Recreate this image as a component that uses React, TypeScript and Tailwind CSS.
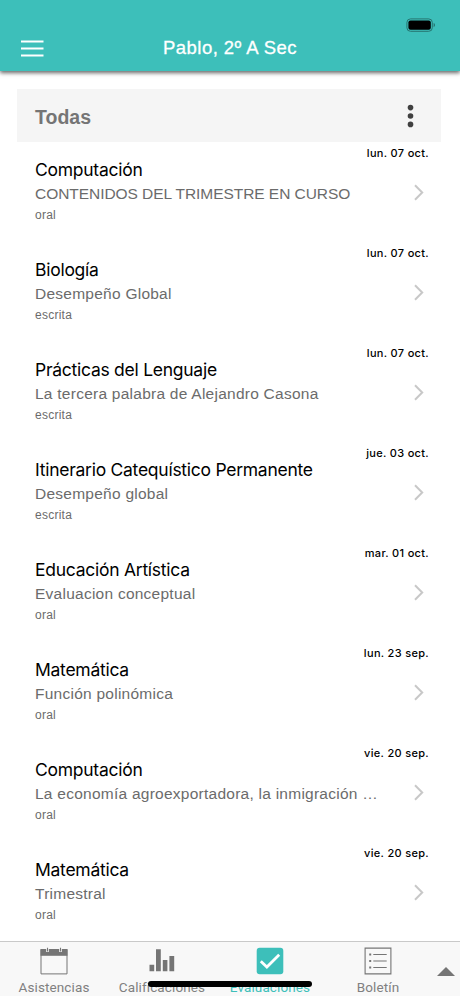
import React from 'react';

interface Evaluation {
  subject: string;
  topic: string;
  kind: 'oral' | 'escrita';
  date: string;
}

const EVALUATIONS: Evaluation[] = [
  { subject: 'Computación', topic: 'CONTENIDOS DEL TRIMESTRE EN CURSO', kind: 'oral', date: 'lun. 07 oct.' },
  { subject: 'Biología', topic: 'Desempeño Global', kind: 'escrita', date: 'lun. 07 oct.' },
  { subject: 'Prácticas del Lenguaje', topic: 'La tercera palabra de Alejandro Casona', kind: 'escrita', date: 'lun. 07 oct.' },
  { subject: 'Itinerario Catequístico Permanente', topic: 'Desempeño global', kind: 'escrita', date: 'jue. 03 oct.' },
  { subject: 'Educación Artística', topic: 'Evaluacion conceptual', kind: 'oral', date: 'mar. 01 oct.' },
  { subject: 'Matemática', topic: 'Función polinómica', kind: 'oral', date: 'lun. 23 sep.' },
  { subject: 'Computación', topic: 'La economía agroexportadora, la inmigración …', kind: 'oral', date: 'vie. 20 sep.' },
  { subject: 'Matemática', topic: 'Trimestral', kind: 'oral', date: 'vie. 20 sep.' },
];

const Battery = () => (
  <svg width="30" height="14" viewBox="0 0 30 14" fill="none">
    <rect x="0.9" y="0.9" width="25.4" height="12.4" rx="3.6" stroke="#267571" />
    <rect x="2.4" y="2.4" width="22.4" height="9.4" rx="2.1" fill="#000" />
    <path d="M27.6 5v4.2c.9-.4 1.4-1.2 1.4-2.1s-.5-1.7-1.4-2.1z" fill="#267571" />
  </svg>
);

const CalendarIcon = () => (
  <svg width="28" height="28" viewBox="0 0 28 28" fill="none">
    <path d="M1 2.5h26v24.4H1z" stroke="#757575" />
    <path d="M.5 2h27v6.8H.5z" fill="#757575" />
    <path d="M7.5 0v5M20.5 0v5" stroke="#f8f8f8" strokeWidth="2.6" />
    <path d="M7.5 .8v3.8M20.5 .8v3.8" stroke="#757575" strokeWidth="1.1" />
  </svg>
);

const BarsIcon = () => (
  <svg width="28" height="28" viewBox="0 0 28 28" fill="#757575">
    <path d="M1.5 17.8h4.7v6.5H1.5zM8 2.2h4.8v22.1H8zM14.8 13h4.6v11.3h-4.6zM21.4 9h4.8v15.3h-4.8z" />
  </svg>
);

const CheckIcon = () => (
  <svg width="28" height="28" viewBox="0 0 28 28" fill="none">
    <rect x="0.7" y="0.7" width="26.6" height="26.6" rx="3" fill="#3dbfba" />
    <path d="M4.8 14.2l6.1 5.9L23.2 7.8" stroke="#fff" strokeWidth="2.8" />
  </svg>
);

const ListIcon = () => (
  <svg width="28" height="28" viewBox="0 0 28 28" fill="none" stroke="#757575">
    <path d="M1.1 1.1h25.8v25.8H1.1z" strokeWidth="1.1" />
    <path d="M9.3 7.5h13.4M9.3 14h13.4M9.3 20.5h13.4" strokeWidth="1.1" />
    <path d="M5.2 7.5h2M5.2 14h2M5.2 20.5h2" strokeWidth="2" />
  </svg>
);

const TABS = [
  { label: 'Asistencias', Icon: CalendarIcon, active: false },
  { label: 'Calificaciones', Icon: BarsIcon, active: false },
  { label: 'Evaluaciones', Icon: CheckIcon, active: true },
  { label: 'Boletín', Icon: ListIcon, active: false },
];

const EvaluationRow: React.FC<{ item: Evaluation }> = ({ item }) => {
  // All-caps topics are set tighter so they keep clear of the chevron.
  const isCaps = item.topic === item.topic.toUpperCase();

  return (
    <li className="flex h-[100px] pl-[18px] pr-[12px]">
      <div className="flex w-0 flex-1 flex-col whitespace-nowrap pt-4">
        <h2 className="h-6 font-['Inter',sans-serif] text-[17.5px] leading-6 tracking-[-0.26px] text-black">
          {item.subject}
        </h2>
        <p className={`h-6 text-[15.5px] leading-6 text-[#6b6b6b] ${isCaps ? 'tracking-[-0.05px]' : 'tracking-[0.25px]'}`}>
          {item.topic}
        </p>
        <p className="mt-px h-4 text-[12px] leading-4 tracking-[0.25px] text-[#6b6b6b]">{item.kind}</p>
      </div>
      <div className="flex shrink-0 flex-col items-end whitespace-nowrap pt-[3px]">
        <time className="h-4 font-['Inter',sans-serif] text-[11px] font-medium leading-4 tracking-[0.32px] text-black">
          {item.date}
        </time>
        <svg className="mr-[5px] mt-[23px]" width="10" height="17" viewBox="0 0 10 17" fill="none">
          <path d="M1 1.3l7.2 7.2L1 15.7" stroke="#c8c8c8" strokeWidth="2" />
        </svg>
      </div>
    </li>
  );
};

export default function App() {
  return (
    <div className="relative flex h-[996px] w-[460px] flex-col overflow-hidden bg-white font-['Liberation_Sans',Arial,sans-serif]">
      <header className="z-10 flex h-[71px] shrink-0 flex-col bg-[#3dbfba] shadow-[0_2px_4px_rgba(0,0,0,0.6)]">
        <div className="flex h-8 justify-end pr-[24px] pt-[18px]">
          <Battery />
        </div>
        <div className="grid h-8 grid-cols-[60px_1fr_60px] items-center">
          <button className="pl-[21px]" aria-label="Menú">
            <svg width="23" height="17" viewBox="0 0 23 17" stroke="#fff" strokeWidth="2">
              <path d="M0 1.4h22.5M0 8.5h22.5M0 15.6h22.5" />
            </svg>
          </button>
          <h1 className="text-center text-[18.5px] tracking-[0.45px] text-white [-webkit-text-stroke:0.3px_white]">
            Pablo, 2º A Sec
          </h1>
        </div>
      </header>

      <main className="flex min-h-0 flex-1 flex-col overflow-hidden px-[17px] pt-[18px]">
        <div className="flex h-[53px] w-[424px] shrink-0 items-center justify-between bg-[#f5f5f5] pl-[18px] pr-[27px]">
          <h2 className="pt-[5px] text-[19.5px] font-bold text-[#757575]">Todas</h2>
          <svg width="7" height="24" viewBox="0 0 7 24" fill="#404040">
            <circle cx="3.5" cy="3.6" r="2.8" />
            <circle cx="3.5" cy="12" r="2.8" />
            <circle cx="3.5" cy="20.4" r="2.8" />
          </svg>
        </div>
        <ul className="w-[424px]">
          {EVALUATIONS.map((item, i) => (
            <EvaluationRow key={i} item={item} />
          ))}
        </ul>
      </main>

      <nav className="flex h-[55px] shrink-0 border-t border-[#c9c9c9] bg-[#f8f8f8]">
        {TABS.map(({ label, Icon, active }) => (
          <button key={label} className="flex w-[108px] flex-col items-center pt-[5px]">
            <Icon />
            <span
              className={`mt-[3px] font-['Roboto',sans-serif] text-[13.5px] leading-[18px] tracking-[0.12px] ${
                active ? 'text-[#3dbfba]' : 'text-[#808080]'
              }`}
            >
              {label}
            </span>
          </button>
        ))}
        <div className="flex flex-1 justify-center pt-[25px]">
          <svg width="18" height="9" viewBox="0 0 18 9" fill="#757575">
            <path d="M0 9L9 0l9 9z" />
          </svg>
        </div>
      </nav>

      {/* Home indicator */}
      <div className="absolute bottom-[9px] left-[148px] h-[6px] w-[164px] rounded-full bg-black" />
    </div>
  );
}
